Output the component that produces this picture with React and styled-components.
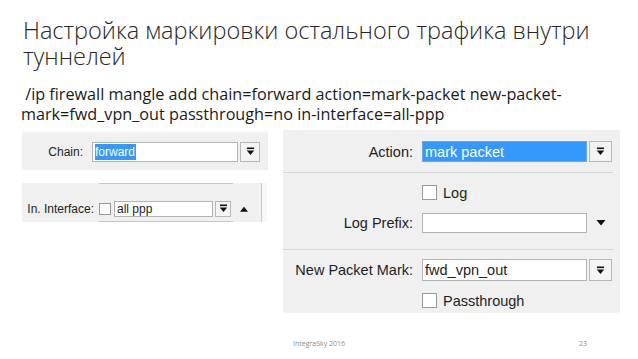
import React from "react";
import styled, { createGlobalStyle } from "styled-components";

const GlobalStyle = createGlobalStyle`
  html, body { margin: 0; padding: 0; background: #ffffff; }
  * { box-sizing: border-box; }
`;

const Slide = styled.div`
  width: 638px;
  height: 359px;
  overflow: hidden;
  background: #ffffff;
  display: flex;
  flex-direction: column;
`;

const Title = styled.h1`
  margin: 17px 0 0 0;
  padding-left: 23px;
  font-family: "Open Sans", "Noto Sans", sans-serif;
  font-weight: 300;
  font-size: 23.5px;
  line-height: 26px;
  color: #262626;
  white-space: nowrap;
`;

const Command = styled.p`
  margin: 15px 0 0 0;
  padding-left: 21px;
  font-family: "Open Sans", "Noto Sans", sans-serif;
  font-weight: 400;
  font-size: 16.2px;
  line-height: 20px;
  color: #1a1a1a;
  white-space: pre;
`;

const Panels = styled.div`
  display: flex;
  align-items: flex-start;
  margin-top: 6px;
  padding-left: 22px;
`;

const LeftColumn = styled.div`
  display: flex;
  flex-direction: column;
  gap: 13px;
  width: 246px;
  margin-top: 1px;
  font-family: "Liberation Sans", Arial, sans-serif;
  font-size: 12px;
  color: #1e1e1e;
`;

const ChainPanel = styled.div`
  height: 39px;
  background: #f0f0f0;
  border-top: 2px solid #f7f7f7;
  display: flex;
  align-items: center;
`;

const IfacePanel = styled.div`
  height: 39px;
  display: flex;
`;

const IfaceBody = styled.div`
  width: 240px;
  background: #f0f0f0;
  border-right: 1px solid #c9c9c9;
  display: flex;
  flex-direction: column;
`;

const ScrollEdge = styled.div`
  width: 5px;
  background: #f6f6f6;
`;

const EdgeLine = styled.div`
  margin-left: 77px;
  width: 134px;
  height: 1px;
  background: #c6c6c6;
`;

const IfaceRow = styled.div`
  display: flex;
  align-items: center;
  margin-top: 12px;
  height: 16px;
  flex: 1;
  align-self: stretch;
`;

const Label = styled.span`
  width: ${(p) => p.$w}px;
  text-align: right;
  flex-shrink: 0;
  white-space: nowrap;
  margin-right: ${(p) => p.$gap}px;
`;

const TextBox = styled.div`
  width: ${(p) => p.$w}px;
  height: ${(p) => p.$h}px;
  background: ${(p) => (p.$filled ? "#3399ff" : "#ffffff")};
  border: 1px solid ${(p) => (p.$filled ? "#6fa8dc" : "#b4b4b4")};
  color: ${(p) => (p.$filled ? "#ffffff" : "#1e1e1e")};
  display: flex;
  align-items: center;
  padding-left: 2px;
  white-space: nowrap;
  flex-shrink: 0;
`;

const Selected = styled.span`
  background: #3399ff;
  color: #ffffff;
  padding: 1px 1px 1px 0;
`;

const DropButton = styled.div`
  width: ${(p) => p.$w}px;
  height: ${(p) => p.$h}px;
  margin-left: 2px;
  background: #f4f4f4;
  border: 1px solid #b8b8b8;
  display: flex;
  align-items: center;
  justify-content: center;
  flex-shrink: 0;
`;

const Check = styled.div`
  width: ${(p) => p.$s}px;
  height: ${(p) => p.$s}px;
  background: #ffffff;
  border: 1px solid #9a9a9a;
  flex-shrink: 0;
`;

const Spacer = styled.div`
  width: ${(p) => p.$w}px;
  flex-shrink: 0;
`;

const RightPanel = styled.div`
  margin-left: 15px;
  width: 337px;
  height: 183px;
  background: #f0f0f0;
  padding-top: 11px;
  display: flex;
  flex-direction: column;
  font-family: "Liberation Sans", Arial, sans-serif;
  font-size: 14.5px;
  color: #1e1e1e;
`;

const FieldRow = styled.div`
  display: flex;
  align-items: center;
  height: ${(p) => p.$h}px;
  margin-top: ${(p) => p.$mt || 0}px;
`;

const CheckRow = styled.label`
  display: flex;
  align-items: center;
  gap: 6px;
  height: 15px;
  padding-left: 139px;
  margin-top: ${(p) => p.$mt}px;
`;

const Separator = styled.div`
  width: 330px;
  height: 1px;
  background: #d6d6d6;
  margin-top: ${(p) => p.$mt}px;
`;

const Footer = styled.div`
  margin-top: auto;
  height: 32px;
  display: flex;
  align-items: center;
  padding: 0 51px 0 293px;
  font-family: "Open Sans", "Noto Sans", sans-serif;
  font-size: 7px;
  color: #8a8a8a;
`;

const PageNum = styled.span`
  margin-left: auto;
`;

const DropIcon = () => (
  <svg width="9" height="9" viewBox="0 0 9 9">
    <rect x="1" y="0.5" width="7" height="1.6" fill="#111" />
    <polygon points="0.8,3.4 8.2,3.4 4.5,8" fill="#111" />
  </svg>
);

const Triangle = ({ up, w = 9 }) => (
  <svg width={w} height="6" viewBox="0 0 9 6">
    {up ? (
      <polygon points="0,6 9,6 4.5,0.5" fill="#111" />
    ) : (
      <polygon points="0,0 9,0 4.5,5.5" fill="#111" />
    )}
  </svg>
);

export default function App() {
  return (
    <>
      <GlobalStyle />
      <Slide>
        <Title>
          Настройка маркировки остального трафика внутри
          <br />
          туннелей
        </Title>
        <Command>
          {" /ip firewall mangle add chain=forward action=mark-packet new-packet-"}
          <br />
          {"mark=fwd_vpn_out passthrough=no in-interface=all-ppp"}
        </Command>
        <Panels>
          <LeftColumn>
            <ChainPanel>
              <Label $w={61} $gap={9}>Chain:</Label>
              <TextBox $w={146} $h={20}>
                <Selected>forward</Selected>
              </TextBox>
              <DropButton $w={20} $h={20}>
                <DropIcon />
              </DropButton>
            </ChainPanel>
            <IfacePanel>
              <IfaceBody>
                <EdgeLine />
                <IfaceRow>
                  <Label $w={72} $gap={5}>In. Interface:</Label>
                  <Check $s={12} />
                  <Spacer $w={3} />
                  <TextBox $w={99} $h={16}>all ppp</TextBox>
                  <DropButton $w={16} $h={16}>
                    <DropIcon />
                  </DropButton>
                  <Spacer $w={9} />
                  <Triangle up w={8} />
                </IfaceRow>
                <EdgeLine />
              </IfaceBody>
              <ScrollEdge />
            </IfacePanel>
          </LeftColumn>
          <RightPanel>
            <FieldRow $h={21}>
              <Label $w={130} $gap={9}>Action:</Label>
              <TextBox $w={165} $h={21} $filled>mark packet</TextBox>
              <DropButton $w={23} $h={21}>
                <DropIcon />
              </DropButton>
            </FieldRow>
            <Separator $mt={10} />
            <CheckRow $mt={12}>
              <Check $s={15} />
              Log
            </CheckRow>
            <FieldRow $h={20} $mt={13}>
              <Label $w={130} $gap={9}>Log Prefix:</Label>
              <TextBox $w={165} $h={20} />
              <Spacer $w={9} />
              <Triangle w={10} />
            </FieldRow>
            <Separator $mt={16} />
            <FieldRow $h={22} $mt={9}>
              <Label $w={130} $gap={9}>New Packet Mark:</Label>
              <TextBox $w={165} $h={22}>fwd_vpn_out</TextBox>
              <DropButton $w={23} $h={22}>
                <DropIcon />
              </DropButton>
            </FieldRow>
            <CheckRow $mt={12}>
              <Check $s={15} />
              Passthrough
            </CheckRow>
          </RightPanel>
        </Panels>
        <Footer>
          <span>IntegraSky 2016</span>
          <PageNum>23</PageNum>
        </Footer>
      </Slide>
    </>
  );
}
